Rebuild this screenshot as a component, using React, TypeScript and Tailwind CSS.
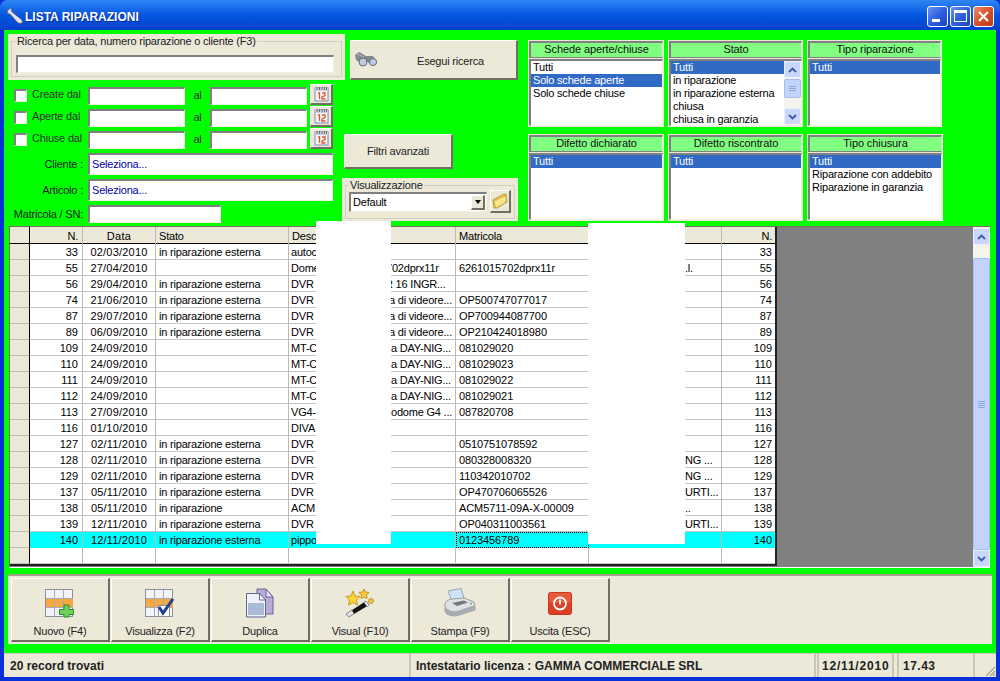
import React from "react";

const sunken = "bg-white border-t-2 border-l-2 border-t-[#808080] border-l-[#808080] border-r border-b border-r-[#f1efe2] border-b-[#f1efe2]";
const raised = "bg-[#ece9d8] border-t border-l border-t-white border-l-white border-r-2 border-b-2 border-r-[#716f64] border-b-[#716f64]";
const ext = "in riparazione esterna";

type Row = { n: string; d: string; s: string; l: string; r?: string; w?: string; m?: string; o?: string };
const rows: Row[] = [
  { n: "33", d: "02/03/2010", s: ext, l: "autoc" },
  { n: "55", d: "27/04/2010", s: "", l: "Dome", r: "702dprx11r", w: "w-[95px]", m: "6261015702dprx11r", o: ".l." },
  { n: "56", d: "29/04/2010", s: ext, l: "DVR", r: "R 16 INGR...", w: "w-[94px]" },
  { n: "74", d: "21/06/2010", s: ext, l: "DVR", r: "a di videore...", w: "w-[98px]", m: "OP500747077017" },
  { n: "87", d: "29/07/2010", s: ext, l: "DVR", r: "a di videore...", w: "w-[98px]", m: "OP700944087700" },
  { n: "89", d: "06/09/2010", s: ext, l: "DVR", r: "a di videore...", w: "w-[98px]", m: "OP210424018980" },
  { n: "109", d: "24/09/2010", s: "", l: "MT-C", r: "a DAY-NIG...", w: "w-[100px]", m: "081029020" },
  { n: "110", d: "24/09/2010", s: "", l: "MT-C", r: "a DAY-NIG...", w: "w-[100px]", m: "081029023" },
  { n: "111", d: "24/09/2010", s: "", l: "MT-C", r: "a DAY-NIG...", w: "w-[100px]", m: "081029022" },
  { n: "112", d: "24/09/2010", s: "", l: "MT-C", r: "a DAY-NIG...", w: "w-[100px]", m: "081029021" },
  { n: "113", d: "27/09/2010", s: "", l: "VG4-", r: "odome G4 ...", w: "w-[100px]", m: "087820708" },
  { n: "116", d: "01/10/2010", s: "", l: "DIVA" },
  { n: "127", d: "02/11/2010", s: ext, l: "DVR", m: "0510751078592" },
  { n: "128", d: "02/11/2010", s: ext, l: "DVR", m: "080328008320", o: "NG ..." },
  { n: "129", d: "02/11/2010", s: ext, l: "DVR", m: "110342010702", o: "NG ..." },
  { n: "137", d: "05/11/2010", s: ext, l: "DVR", m: "OP470706065526", o: "URTI..." },
  { n: "138", d: "05/11/2010", s: "in riparazione", l: "ACM", m: "ACM5711-09A-X-00009", o: ".." },
  { n: "139", d: "12/11/2010", s: ext, l: "DVR", m: "OP040311003561", o: "URTI..." },
  { n: "140", d: "12/11/2010", s: ext, l: "pippo", m: "0123456789" },
  { n: "", d: "", s: "", l: "" },
];

const cols = "grid grid-cols-[20px_53px_73px_133px_167px_133px_133px_53px]";

function Wrench() {
  return (
    <svg width="18" height="18" viewBox="0 0 18 18">
      <path d="M2 3 L5 1 L6 5 L16 13 L16.500 15.500 L14 16.500 L11.500 15.500 L4.500 7.500 L1 6 Z" fill="#dfe3ea" stroke="#5a6070" strokeWidth="0.8" />
    </svg>
  );
}

function Calendar() {
  return (
    <svg width="15" height="16" viewBox="0 0 15 16">
      <rect x="1" y="2" width="13" height="13" fill="#f4f6fb" stroke="#7f8aa8" />
      <rect x="1" y="2" width="13" height="3" fill="#c8cfe0" />
      <path d="M3 1v3M5.500 1v3M8 1v3M10.500 1v3M12.500 1v3" stroke="#555" strokeWidth="0.8" />
      <path d="M4 7h1.500v6M8 7h3v2.500l-3 1.500v2h3.500" fill="none" stroke="#e0552a" strokeWidth="1.300" />
    </svg>
  );
}

function Binoculars() {
  return (
    <svg width="24" height="18" viewBox="0 0 24 18">
      <path d="M1 4 L5 1 L12 5 L19 5 L23 11 L18 14 L12 10 L8 13 L2 9 Z" fill="#85888e" />
      <circle cx="9" cy="11" r="4" fill="#b9cbe6" stroke="#6a6d73" />
      <circle cx="19" cy="11" r="3.600" fill="#b9cbe6" stroke="#6a6d73" />
      <path d="M3 3 L10 6" stroke="#b4b7bd" />
    </svg>
  );
}

function Folder() {
  return (
    <svg width="16" height="17" viewBox="0 0 16 17">
      <path d="M1 7 L10 2 L14 1 L15 9 L5 15 L2 15 Z" fill="#f0c94d" stroke="#a8842a" strokeWidth="0.8" />
      <path d="M2 8 L11 4 L15 4 L13 10 L4 15 Z" fill="#fbe58b" stroke="#c9a437" strokeWidth="0.6" />
    </svg>
  );
}

function TableBase() {
  return (
    <>
      <rect x="0.5" y="1.5" width="27" height="27" fill="#f2f4fa" stroke="#8b8f99" />
      <rect x="1" y="11" width="27" height="8" fill="#f7a93f" />
      <path d="M9.500 2v26M18.500 2v26M1 10.500h27M1 19.500h27" stroke="#a7abb4" fill="none" />
    </>
  );
}

function GridPlus() {
  return (
    <svg width="30" height="30" viewBox="0 0 30 30">
      <TableBase />
      <path d="M19 17h5v4.500h4.500v5H24V29h-5v-2.500h-4.500v-5H19z" fill="#6fd35a" stroke="#2f8a2b" strokeWidth="1" />
    </svg>
  );
}

function GridCheck() {
  return (
    <svg width="30" height="30" viewBox="0 0 30 30">
      <TableBase />
      <rect x="13.500" y="17.500" width="11" height="11" fill="#fff" stroke="#8b8f99" />
      <path d="M14 19 L18 25 L28 11" fill="none" stroke="#1f3f9a" strokeWidth="3" />
    </svg>
  );
}

function Docs() {
  return (
    <svg width="30" height="30" viewBox="0 0 30 30">
      <path d="M12 1h9l7 8v17H12z" fill="#b9acd9" stroke="#6a5f99" />
      <path d="M21 1v8h7z" fill="#e6e0f4" stroke="#6a5f99" />
      <path d="M1.500 5.500h13l6 6.500v17h-19z" fill="#eef2fa" stroke="#5d6a8c" />
      <rect x="3" y="15" width="16" height="12" fill="#aabbd9" />
      <path d="M14.500 5.500v6.500h6z" fill="#fff" stroke="#5d6a8c" />
    </svg>
  );
}

function Wand() {
  return (
    <svg width="32" height="30" viewBox="0 0 32 30">
      <path d="M2 26 L22 13 L25 17 L5 29 Z" fill="#111" />
      <path d="M2 26 L8 22 L10 26 L5 29 Z" fill="#dfe0e4" stroke="#777" strokeWidth="0.6" />
      <path d="M20 14.500 L22 13 L25 17 L23 18.500 Z" fill="#f0f0f0" stroke="#777" strokeWidth="0.6" />
      <path d="M9 3 L11 8 L16 8.500 L12.500 12 L13.500 17 L9 14.500 L4.500 17 L5.500 12 L2 8.500 L7 8 Z" fill="#fbd53a" stroke="#b88a10" strokeWidth="0.8" />
      <path d="M20 1 L21.500 4 L25 4.500 L22.500 7 L23 10.500 L20 9 L17 10.500 L17.500 7 L15 4.500 L18.500 4 Z" fill="#fbc93a" stroke="#b88a10" strokeWidth="0.8" />
      <circle cx="27" cy="13" r="2.500" fill="#f5c637" stroke="#a9801a" strokeWidth="0.7" />
    </svg>
  );
}

function Printer() {
  return (
    <svg width="32" height="30" viewBox="0 0 32 30">
      <path d="M4 3 L17 0.500 L21 13 L9 16 Z" fill="#cfe4f8" stroke="#7f95ad" strokeWidth="0.8" />
      <path d="M1 17 Q1 12 8 11 L20 10 L30 14 Q31 16 31 22 L12 28 Q2 28 1 23 Z" fill="#dfe1e3" stroke="#8a8d90" strokeWidth="0.8" />
      <path d="M1 19 Q6 24 13 23 L31 17 L31 22 L12 28 Q2 28 1 23 Z" fill="#a9adb1" />
      <path d="M8 15 L20 12.500 L24 14.500 L13 18 Z" fill="#74787c" />
      <circle cx="27" cy="15.500" r="1" fill="#5fc25f" />
    </svg>
  );
}

function Power() {
  return (
    <svg width="24" height="23" viewBox="0 0 24 23">
      <rect x="0.500" y="0.500" width="23" height="22" rx="2" fill="#dc3f24" stroke="#c83a20" />
      <rect x="1" y="1" width="22" height="10" rx="2" fill="#e85a3c" />
      <circle cx="12" cy="11.500" r="6" fill="none" stroke="#fff" strokeWidth="1.800" />
      <path d="M12 7.500v5" stroke="#fff" strokeWidth="1.800" />
    </svg>
  );
}

function WinBtn({ kind }: { kind: "min" | "max" | "close" }) {
  const bg =
    kind === "close"
      ? "bg-gradient-to-br from-[#e88a6c] via-[#d8502a] to-[#b23a18]"
      : "bg-gradient-to-br from-[#6d93ee] via-[#2f5fe0] to-[#1d44c0]";
  return (
    <div className={`w-[21px] h-[21px] rounded-[3px] border border-white flex items-center justify-center ${bg}`}>
      {kind === "min" && <div className="w-[8px] h-[3px] bg-white mt-[9px] -ml-[3px]" />}
      {kind === "max" && <div className="w-[13px] h-[12px] border border-white border-t-[3px]" />}
      {kind === "close" && (
        <svg width="13" height="13" viewBox="0 0 13 13">
          <path d="M2 2 L11 11 M11 2 L2 11" stroke="#fff" strokeWidth="2.200" />
        </svg>
      )}
    </div>
  );
}

function DateRow({ label }: { label: string }) {
  return (
    <div className="flex items-start h-[22px]">
      <div className="w-[80px] flex items-start h-[18px] pl-[7px] mt-[3px]">
        <div className={`w-[13px] h-[13px] mt-[2px] -ml-px ${sunken}`} />
        <span className="ml-[5px] mt-px text-[#333]">{label}</span>
      </div>
      <div className={`w-[97px] h-[18px] mt-[3px] ${sunken}`} />
      <div className="w-[25px] h-[18px] mt-[3px] pt-[2px] text-center text-[#333]">al</div>
      <div className={`w-[97px] h-[18px] mt-[3px] ${sunken}`} />
      <button className={`ml-[3px] w-[23px] h-[21px] flex items-center justify-center ${raised}`}>
        <Calendar />
      </button>
    </div>
  );
}

function FieldRow({ label, value, w, h }: { label: string; value?: string; w: string; h: string }) {
  return (
    <div className="flex items-center">
      <div className="w-[80px] pr-[5px] text-right whitespace-nowrap text-[#222]">{label}</div>
      <div className={`${w} ${h} ${sunken} pl-[2px] flex items-center text-[#0000a8]`}>{value}</div>
    </div>
  );
}

function ScrollBtn({ up }: { up?: boolean }) {
  return (
    <div className="h-[17px] bg-[#c8d7fb] border border-[#eaf0fe] rounded-[2px] flex items-center justify-center">
      <svg width="9" height="6" viewBox="0 0 9 6">
        <path d={up ? "M1 5 L4.500 1.500 L8 5" : "M1 1 L4.500 4.500 L8 1"} fill="none" stroke="#3a5aa8" strokeWidth="1.800" />
      </svg>
    </div>
  );
}

function ListBox({
  title,
  items,
  sel,
  w,
  h,
  scroll,
}: {
  title: string;
  items: string[];
  sel: number;
  w: string;
  h: string;
  scroll?: boolean;
}) {
  return (
    <div className={`${w} ${h} flex flex-col bg-[#ece9d8] p-px`}>
      <div className="h-[17px] shrink-0 pb-[2px] bg-[#80ff80] border-t-2 border-l-2 border-t-[#808080] border-l-[#808080] border-b border-r border-b-[#808080] border-r-[#ece9d8] flex items-center justify-center tracking-[-0.1px] text-[#111]">
        {title}
      </div>
      <div className={`flex-1 mt-px ${sunken} flex overflow-hidden`}>
        <div className="flex-1 min-w-0">
          {items.map((t, i) => (
            <div
              key={t}
              className={`h-[13px] leading-[13px] pl-[2px] whitespace-nowrap ${i === sel ? "bg-[#316ac5] text-white" : "text-black"}`}
            >
              {t}
            </div>
          ))}
        </div>
        {scroll && (
          <div className="w-[17px] shrink-0 bg-[#f4f3ec] flex flex-col justify-between">
            <div>
              <ScrollBtn up />
              <div className="mt-px h-[19px] bg-[#c3d3fb] border border-[#a5bdf0] rounded-[2px] flex flex-col items-center justify-center gap-px">
                <div className="w-[7px] h-px bg-[#8ea7de]" />
                <div className="w-[7px] h-px bg-[#8ea7de]" />
                <div className="w-[7px] h-px bg-[#8ea7de]" />
              </div>
            </div>
            <ScrollBtn />
          </div>
        )}
      </div>
    </div>
  );
}

function ToolBtn({ label, children }: { label: string; children: React.ReactNode }) {
  return (
    <button className={`w-[99px] h-[64px] flex flex-col items-center pt-[9px] text-[#222] ${raised}`}>
      <div className="h-[30px] flex items-center justify-center">{children}</div>
      <div className="mt-[7px] leading-[13px] whitespace-nowrap">{label}</div>
    </button>
  );
}

export default function App() {
  return (
    <div className="relative w-[1000px] h-[681px] flex flex-col overflow-hidden bg-[#0831d9] text-[11px] leading-[13px] tracking-[-0.2px] font-['Liberation_Sans',Arial,sans-serif] text-black">
      {/* Title bar */}
      <div className="h-[30px] shrink-0 rounded-t-[7px] bg-gradient-to-b from-[#2f86f5] via-[#0556e0] to-[#0342cc] flex items-center pt-[2px] pl-[6px] pr-[6px]">
        <Wrench />
        <div className="ml-[1px] mt-[2px] text-[12px] tracking-[0px] font-bold text-white [text-shadow:1px_1px_#0a2a90]">LISTA RIPARAZIONI</div>
        <div className="ml-auto flex gap-[2px]">
          <WinBtn kind="min" />
          <WinBtn kind="max" />
          <WinBtn kind="close" />
        </div>
      </div>

      {/* Client */}
      <div className="h-[647px] shrink-0 mx-[4px] bg-[#00ff00] flex flex-col">
        <div className="h-[196px] shrink-0 flex pl-[4px]">
          {/* Left column */}
          <div className="w-[337px] shrink-0 pt-[4px] flex flex-col">
            <div className="h-[46px] bg-[#ece9d8] pt-px px-[3px]">
              <fieldset className="h-[42px] border border-[#d0d0bf] pl-[4px] pr-[7px]">
                <legend className="px-px leading-[13px] text-[#222]">Ricerca per data, numero riparazione o cliente (F3)</legend>
                <div className={`h-[18px] mt-[7px] ${sunken}`} />
              </fieldset>
            </div>
            <div className="mt-[4px] flex flex-col">
              <DateRow label="Create dal" />
              <DateRow label="Aperte dal" />
              <DateRow label="Chiuse dal" />
            </div>
            <div className="mt-[3px] flex flex-col gap-[4px]">
              <FieldRow label="Cliente :" value="Seleziona..." w="w-[245px]" h="h-[22px]" />
              <FieldRow label="Articolo :" value="Seleziona..." w="w-[245px]" h="h-[22px]" />
              <FieldRow label="Matricola / SN:" w="w-[133px]" h="h-[18px]" />
            </div>
          </div>

          {/* Middle column */}
          <div className="w-[183px] shrink-0 flex flex-col">
            <button className={`mt-[10px] ml-[5px] w-[168px] h-[40px] flex items-center pl-[3px] text-[#222] ${raised}`}>
              <Binoculars />
              <span className="ml-[39px] pt-[3px]">Esegui ricerca</span>
            </button>
            <button className={`mt-[54px] -ml-px w-[109px] h-[35px] pt-px text-[#222] ${raised}`}>Filtri avanzati</button>
            <div className="mt-[9px] -ml-[3px] w-[176px] h-[43px] bg-[#ece9d8] pt-px px-[3px]">
              <fieldset className="h-[40px] border border-[#d0d0bf] pl-[3px]">
                <legend className="px-px leading-[13px] text-[#222]">Visualizzazione</legend>
                <div className="flex items-start">
                  <div className={`w-[138px] h-[20px] ${sunken} flex items-center pl-[2px] justify-between pr-px`}>
                    <span>Default</span>
                    <div className={`w-[14px] h-[15px] flex items-center justify-center ${raised}`}>
                      <div className="w-0 h-0 border-x-[3.500px] border-x-transparent border-t-[4px] border-t-black" />
                    </div>
                  </div>
                  <button className={`ml-[3px] -mt-[2px] w-[21px] h-[23px] flex items-center justify-center ${raised}`}>
                    <Folder />
                  </button>
                </div>
              </fieldset>
            </div>
          </div>

          {/* Filter lists */}
          <div className="flex flex-col pt-[10px]">
            <div className="flex gap-[4px] h-[87px]">
              <ListBox w="w-[136px]" h="h-[87px]" title="Schede aperte/chiuse" items={["Tutti", "Solo schede aperte", "Solo schede chiuse"]} sel={1} />
              <ListBox w="w-[135px]" h="h-[87px]" title="Stato" items={["Tutti", "in riparazione", "in riparazione esterna", "chiusa", "chiusa in garanzia"]} sel={0} scroll />
              <ListBox w="w-[135px]" h="h-[87px]" title="Tipo riparazione" items={["Tutti"]} sel={0} />
            </div>
            <div className="flex gap-[4px] mt-[7px]">
              <ListBox w="w-[136px]" h="h-[87px]" title="Difetto dichiarato" items={["Tutti"]} sel={0} />
              <ListBox w="w-[135px]" h="h-[87px]" title="Difetto riscontrato" items={["Tutti"]} sel={0} />
              <ListBox w="w-[136px]" h="h-[87px]" title="Tipo chiusura" items={["Tutti", "Riparazione con addebito", "Riparazione in garanzia"]} sel={0} />
            </div>
          </div>
        </div>

        {/* Data grid */}
        <div className="h-[342px] shrink-0 ml-[5px] mr-[6px] flex bg-[#808080] border-t border-l border-t-[#716f64] border-l-[#716f64] border-b border-b-white">
          <div className="w-[767px] h-[339px] shrink-0 bg-white border-r-2 border-b-2 border-r-[#222] border-b-[#222]">
            <div className={`${cols} h-[17px] bg-[#ece9d8] border-b border-b-black`}>
              <div className="border-r border-r-black" />
              <div className="border-r border-r-[#bbb] text-right pr-[4px] leading-[18px]">N.</div>
              <div className="border-r border-r-[#bbb] text-center leading-[18px] tracking-[0.3px]">Data</div>
              <div className="border-r border-r-[#bbb] pl-[3px] leading-[18px]">Stato</div>
              <div className="border-r border-r-[#bbb] pl-[3px] leading-[18px]">Descrizione</div>
              <div className="border-r border-r-[#bbb] pl-[3px] leading-[18px]">Matricola</div>
              <div className="border-r border-r-[#bbb]" />
              <div className="text-right pr-[3px] leading-[18px]">N.</div>
            </div>
            {rows.map((r, i) => {
              const hi = r.n === "140";
              const cell = `h-[16px] leading-[17px] border-r border-r-[#bbb] border-b whitespace-nowrap overflow-hidden ${hi ? "border-b-[#00ffff]" : "border-b-[#c4c4c4]"}`;
              return (
                <div key={i} className={`${cols} h-[16px] ${hi ? "bg-[#00ffff]" : "bg-white"}`}>
                  <div className="h-[16px] bg-[#ece9d8] border-r border-r-black border-b border-b-[#bbb]" />
                  <div className={`${cell} text-right pr-[4px] tracking-[0px]`}>{r.n}</div>
                  <div className={`${cell} text-center tracking-[0.2px]`}>{r.d}</div>
                  <div className={`${cell} pl-[3px]`}>{r.s}</div>
                  <div className={`${cell} pl-[2px] flex`}>
                    <span className={`${r.w ?? "w-[96px]"} shrink-0 overflow-hidden`}>{r.l}</span>
                    <span>{r.r}</span>
                  </div>
                  {hi ? (
                    <div className="h-[16px] leading-[15px] border border-dotted border-black pl-[2px] whitespace-nowrap overflow-hidden tracking-[-0.1px]">{r.m}</div>
                  ) : (
                    <div className={`${cell} pl-[3px] tracking-[-0.1px]`}>{r.m}</div>
                  )}
                  <div className={`${cell} pl-[96px]`}>{r.o}</div>
                  <div className={`${cell} border-r-0 text-right pr-[3px] tracking-[0px]`}>{r.n}</div>
                </div>
              );
            })}
          </div>
          <div className="flex-1" />
          <div className="w-[17px] shrink-0 bg-[#f4f3ec] flex flex-col pt-px">
            <ScrollBtn up />
            <div className="mt-[13px] flex-1 bg-[#c3d3fb] border border-[#a5bdf0] rounded-[2px] flex flex-col items-center justify-center gap-px">
              <div className="w-[7px] h-px bg-[#8ea7de]" />
              <div className="w-[7px] h-px bg-[#8ea7de]" />
              <div className="w-[7px] h-px bg-[#8ea7de]" />
              <div className="w-[7px] h-px bg-[#8ea7de]" />
            </div>
            <ScrollBtn />
          </div>
        </div>

        {/* Toolbar */}
        <div className="mt-[6px] h-[70px] shrink-0 ml-[4px] mr-[4px] bg-[#ece9d8] border-t-2 border-t-[#a5a28f] flex gap-px pl-[3px] pt-[2px]">
          <ToolBtn label="Nuovo (F4)"><GridPlus /></ToolBtn>
          <ToolBtn label="Visualizza (F2)"><GridCheck /></ToolBtn>
          <ToolBtn label="Duplica"><Docs /></ToolBtn>
          <ToolBtn label="Visual (F10)"><Wand /></ToolBtn>
          <ToolBtn label="Stampa (F9)"><Printer /></ToolBtn>
          <ToolBtn label="Uscita (ESC)"><Power /></ToolBtn>
        </div>

        {/* Status bar */}
        <div className="mt-[9px] h-[24px] shrink-0 bg-[#ece9d8] flex font-bold text-[#222] border-t border-t-[#cfccb8] text-[12px] tracking-[0px]">
          <div className="w-[407px] pl-[6px] pt-[2px] flex items-center border-r-2 border-r-[#c8c5b2]">20 record trovati</div>
          <div className="w-[405px] pl-[5px] pt-[2px] flex items-center border-r-2 border-r-[#c8c5b2]">Intestatario licenza : GAMMA COMMERCIALE SRL</div>
          <div className="ml-px w-[77px] pl-[3px] pt-[2px] flex items-center border-x-2 border-x-[#c8c5b2] tracking-[0.8px]">12/11/2010</div>
          <div className="ml-[3px] w-[78px] pl-[4px] pt-[2px] flex items-center border-x-2 border-x-[#c8c5b2] tracking-[0.5px]">17.43</div>
          <div className="flex-1 flex items-end justify-end">
            <svg width="12" height="12" viewBox="0 0 12 12">
              <path d="M11 2 L2 11 M11 6 L6 11 M11 9 L9 11" stroke="#a5a28f" strokeWidth="1.200" />
            </svg>
          </div>
        </div>
      </div>

      {/* White blocks lying over the grid */}
      <div className="absolute left-[316px] top-[221px] w-[75px] h-[323px] bg-white" />
      <div className="absolute left-[588px] top-[223px] w-[97px] h-[321px] bg-white" />
    </div>
  );
}
